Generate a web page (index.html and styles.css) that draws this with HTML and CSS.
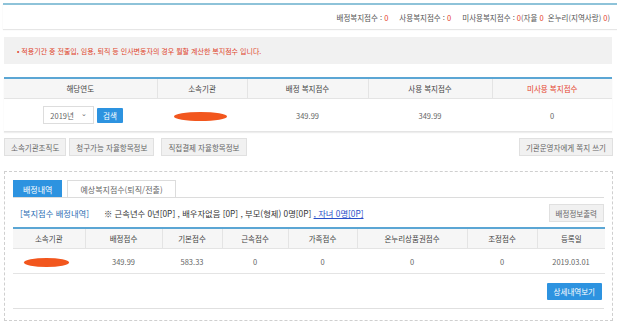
FILE: index.html
```html
<!DOCTYPE html>
<html lang="ko">
<head>
  <meta charset="UTF-8" />
  <title>복지점수</title>
  <link rel="stylesheet" href="styles.css">
</head>
<body>
  <div class="top-bar">
    <span>배정복지점수 : <b class="red">0</b></span>
    <span>사용복지점수 : <b class="red">0</b></span>
    <span>미사용복지점수 : <b class="red">0</b>(자율 <b class="red">0</b> &nbsp;온누리(지역사랑) <b class="red">0</b>)</span>
  </div>

  <div class="notice">
    <p>• 적용기간 중 전출입, 임용, 퇴직 등 인사변동자의 경우 월할 계산한 복지점수 입니다.</p>
  </div>

  <table class="grid summary">
    <colgroup>
      <col style="width:153px"><col style="width:90px"><col style="width:121px"><col style="width:124px"><col>
    </colgroup>
    <tr>
      <th>해당연도</th>
      <th>소속기관</th>
      <th>배정 복지점수</th>
      <th>사용 복지점수</th>
      <th class="red">미사용 복지점수</th>
    </tr>
    <tr>
      <td>
        <div class="year-box">
          <span class="select">2019년 <span class="caret">&#8964;</span></span>
          <button class="btn-blue small">검색</button>
        </div>
      </td>
      <td><span class="blot"></span></td>
      <td>349.99</td>
      <td>349.99</td>
      <td class="red">0</td>
    </tr>
  </table>

  <div class="btn-row">
    <div class="btn-group">
      <button class="btn-gray">소속기관조직도</button>
      <button class="btn-gray">청구가능 자율항목정보</button>
      <button class="btn-gray wide">직접결제 자율항목정보</button>
    </div>
    <button class="btn-gray">기관운영자에게 쪽지 쓰기</button>
  </div>

  <div class="panel">
    <div class="tabs">
      <span class="tab active">배정내역</span>
      <span class="tab">예상복지점수(퇴직/전출)</span>
    </div>

    <div class="info-row">
      <div class="info">
        <span class="blue">[복지점수 배정내역]</span>
        <span class="detail">※ 근속년수 0년[0P] , 배우자없음 [0P] , 부모(형제) 0명[0P] <a href="#">, 자녀 0명[0P]</a></span>
      </div>
      <button class="btn-gray">배정정보출력</button>
    </div>

    <table class="grid history">
      <colgroup>
        <col style="width:72px"><col style="width:77px"><col style="width:60px"><col style="width:66px">
        <col style="width:69px"><col style="width:110px"><col style="width:70px"><col>
      </colgroup>
      <tr>
        <th>소속기관</th>
        <th>배정점수</th>
        <th>기본점수</th>
        <th>근속점수</th>
        <th>가족점수</th>
        <th>온누리상품권점수</th>
        <th>조정점수</th>
        <th>등록일</th>
      </tr>
      <tr>
        <td><span class="blot small-blot"></span></td>
        <td>349.99</td>
        <td>583.33</td>
        <td>0</td>
        <td>0</td>
        <td>0</td>
        <td>0</td>
        <td>2019.03.01</td>
      </tr>
    </table>

    <div class="panel-foot">
      <button class="btn-blue">상세내역보기</button>
    </div>
  </div>
</body>
</html>
```

FILE: styles.css
```css
body {
  margin: 0;
  width: 617px;
  font-family: "Noto Sans CJK KR", "Noto Sans", sans-serif;
  font-size: 7.5px;
  color: #555;
  background: #fff;
}

.red {
  color: #e5432c;
  font-weight: normal;
}

.blue {
  color: #2a6db3;
}

.top-bar {
  margin: 3px 0 0 3px;
  border-top: 2px solid #8ec3d9;
  height: 24px;
  display: flex;
  justify-content: flex-end;
  align-items: center;
  gap: 11px;
  padding-right: 7px;
  box-shadow: 0 1px 1px #e6e6e6;
}

.notice {
  margin: 8px 5px 0 4px;
  background: #f1f1f1;
  height: 27px;
  display: flex;
  align-items: center;
  padding-left: 13px;
}

.notice p {
  margin: 0;
  font-size: 7px;
  color: #e0452c;
}

.grid {
  border-collapse: collapse;
  table-layout: fixed;
  border-top: 2px solid #5ba6d4;
}

.grid th {
  background: #f6f6f6;
  font-weight: normal;
  color: #444;
  height: 19px;
  border-left: 1px solid #e4e4e4;
  border-bottom: 1px solid #e4e4e4;
  padding: 0;
}

.grid th:first-child {
  border-left: none;
}

.grid th.red {
  color: #e5432c;
}

.grid td {
  text-align: center;
  padding: 0;
  color: #666;
}

.summary {
  margin: 13px 0 0 4px;
  width: 608px;
  border-bottom: 1px solid #e4e4e4;
  box-shadow: 0 1px 1px #eee;
}

.summary td {
  height: 32px;
}

.year-box {
  display: flex;
  justify-content: center;
  align-items: center;
  gap: 3px;
  padding-left: 5px;
}

.select {
  width: 49px;
  height: 16px;
  border: 1px solid #ddd;
  display: flex;
  align-items: center;
  justify-content: center;
  gap: 7px;
  color: #666;
}

.caret {
  font-size: 7px;
  line-height: 7px;
  margin-top: -4px;
}

button {
  font-family: inherit;
  font-size: 7.5px;
  cursor: pointer;
}

.btn-blue {
  background: #2d93e0;
  color: #fff;
  border: none;
  height: 17px;
  padding: 0 7px;
  border-radius: 1px;
}

.btn-blue.small {
  height: 15px;
  padding: 0 6px;
}

.btn-gray {
  background: #f1f1f1;
  color: #666;
  border: 1px solid #e0e0e0;
  height: 18px;
  padding: 0 6px;
}

.blot {
  display: inline-block;
  width: 53px;
  height: 9px;
  border-radius: 50%;
  background: #f2561d;
  margin-right: 4px;
  vertical-align: middle;
}

.btn-row {
  margin: 6px 4px 0 4px;
  display: flex;
  justify-content: space-between;
}

.btn-group {
  display: flex;
  gap: 3px;
}

.btn-group .wide {
  margin-left: 4px;
}

.panel {
  margin: 15px 4px 0 4px;
  border: 1px dashed #cfcfcf;
  padding: 8px 8px 11px 8px;
}

.tabs {
  display: flex;
  gap: 5px;
  border-bottom: 1px solid #dcdcdc;
}

.tab {
  height: 16px;
  display: flex;
  align-items: center;
  padding: 0 12px;
  border: 1px solid #dcdcdc;
  border-bottom: none;
  color: #666;
  font-size: 8px;
}

.tab.active {
  background: #2d93e0;
  border-color: #2d93e0;
  color: #fff;
  padding: 0 9px;
}

.info-row {
  display: flex;
  justify-content: space-between;
  align-items: center;
  margin-top: 6px;
  padding-left: 7px;
}

.info {
  display: flex;
  gap: 15px;
  font-size: 8.3px;
}

.detail {
  color: #333;
}

.detail a {
  color: #2a4fc9;
}

.history {
  margin-top: 5px;
  width: 592px;
  border-bottom: 1px solid #e4e4e4;
}

.history td {
  height: 24px;
}

.small-blot {
  width: 45px;
  margin-left: -6px;
  margin-right: 0;
}

.panel-foot {
  display: flex;
  justify-content: flex-end;
  align-items: center;
  height: 34px;
  padding-right: 2px;
  border-bottom: 1px solid #e0e0e0;
}
```
